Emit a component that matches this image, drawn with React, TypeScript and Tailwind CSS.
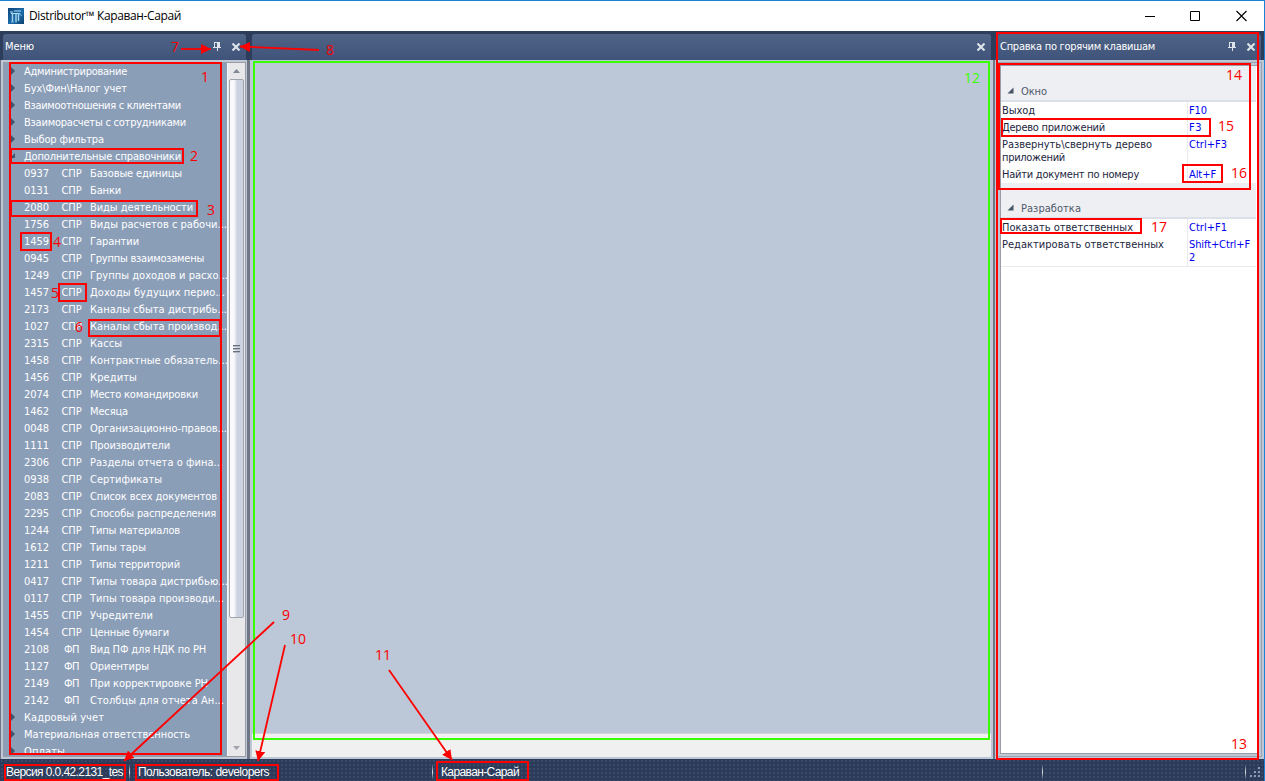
import { useLayoutEffect, useRef, useState } from "react";
import type { ReactNode } from "react";

/** Single line of text whose tracking is adjusted so that it spans `w` pixels. */
function Fit({ w, children, className = "" }: { w: number; children: string; className?: string }) {
  const ref = useRef<HTMLSpanElement>(null);
  const [tracking, setTracking] = useState(0);
  useLayoutEffect(() => {
    const el = ref.current;
    if (!el) return;
    el.style.letterSpacing = "0px";
    const natural = el.getBoundingClientRect().width;
    const next = (w - natural) / children.length;
    el.style.letterSpacing = `${next}px`;
    setTracking(next);
  }, [w, children]);
  return (
    <span ref={ref} className={`inline-block whitespace-pre ${className}`} style={{ letterSpacing: `${tracking}px` }}>
      {children}
    </span>
  );
}

type Doc = [code: string, kind: string, name: string, width: number];

const topGroups: [string, number][] = [
  ["Администрирование", 103],
  ["Бух\\Фин\\Налог учет", 103],
  ["Взаимоотношения с клиентами", 157],
  ["Взаиморасчеты с сотрудниками", 162],
  ["Выбор фильтра", 80],
];

const docs: Doc[] = [
  ["0937", "СПР", "Базовые единицы", 92],
  ["0131", "СПР", "Банки", 31],
  ["2080", "СПР", "Виды деятельности", 103],
  ["1756", "СПР", "Виды расчетов с рабочи...", 137],
  ["1459", "СПР", "Гарантии", 49],
  ["0945", "СПР", "Группы взаимозамены", 114],
  ["1249", "СПР", "Группы доходов и расхо...", 138],
  ["1457", "СПР", "Доходы будущих перио...", 135],
  ["2173", "СПР", "Каналы сбыта дистрибь...", 137],
  ["1027", "СПР", "Каналы сбыта производ...", 137],
  ["2315", "СПР", "Кассы", 32],
  ["1458", "СПР", "Контрактные обязатель...", 138],
  ["1456", "СПР", "Кредиты", 47],
  ["2074", "СПР", "Место командировки", 108],
  ["1462", "СПР", "Месяца", 38],
  ["0048", "СПР", "Организационно-правов...", 137],
  ["1111", "СПР", "Производители", 80],
  ["2306", "СПР", "Разделы отчета о фина...", 133],
  ["0938", "СПР", "Сертификаты", 72],
  ["2083", "СПР", "Список всех документов", 127],
  ["2295", "СПР", "Способы распределения", 126],
  ["1244", "СПР", "Типы материалов", 90],
  ["1612", "СПР", "Типы тары", 56],
  ["1211", "СПР", "Типы территорий", 90],
  ["0417", "СПР", "Типы товара дистрибью...", 138],
  ["0117", "СПР", "Типы товара производи...", 134],
  ["1455", "СПР", "Учредители", 63],
  ["1454", "СПР", "Ценные бумаги", 79],
  ["2108", "ФП", "Вид ПФ для НДК по РН", 116],
  ["1127", "ФП", "Ориентиры", 59],
  ["2149", "ФП", "При корректировке РН", 118],
  ["2142", "ФП", "Столбцы для отчета Ан...", 134],
];

const bottomGroups: [string, number][] = [
  ["Кадровый учет", 80],
  ["Материальная ответственность", 166],
  ["Оплаты", 41],
];

function CloseIcon() {
  return (
    <svg width="10" height="8" viewBox="0 0 10 8" className="shrink-0">
      <path d="M1.5 .5 8.5 7.5M8.5 .5 1.5 7.5" stroke="#dfe4eb" strokeWidth="2.1" />
    </svg>
  );
}

function PinIcon() {
  return (
    <svg width="8" height="9" viewBox="0 0 8 9" className="shrink-0" shapeRendering="crispEdges">
      <path d="M1 0h6v5h1v1H5v3H4V6H0V5h1zM2 1v4h2V1z" fill="#dfe4eb" fillRule="evenodd" />
    </svg>
  );
}

function AppIcon() {
  return (
    <svg width="16" height="16" viewBox="0 0 16 16" className="shrink-0">
      <defs>
        <linearGradient id="logo" x1="0" y1="0" x2="1" y2="1">
          <stop offset="0" stopColor="#0d477b" />
          <stop offset=".55" stopColor="#1b6cab" />
          <stop offset="1" stopColor="#0b426f" />
        </linearGradient>
      </defs>
      <rect width="16" height="16" fill="url(#logo)" />
      <path d="M2 4h3M6 3h7M3 5.500h9" stroke="#b9e3f5" strokeWidth="1" />
      <path d="M4.500 5v9M8 5.500V14M10.500 5.500V13" stroke="#a3d4ec" strokeWidth="1.4" />
      <path d="M10.500 6h2l1 2M3 14h3M7 14h2" stroke="#6fb3db" strokeWidth="1" fill="none" />
    </svg>
  );
}

function Header({ children, className }: { children: ReactNode; className: string }) {
  return (
    <div className={`flex h-[26px] shrink-0 items-center rounded-t-[3px] bg-linear-to-b from-[#4f6386] to-[#40547b] text-white ${className}`}>
      {children}
    </div>
  );
}

function GroupRow({ label, w, open = false }: { label: string; w: number; open?: boolean }) {
  return (
    <div className="flex h-[17px] shrink-0 items-center">
      <svg width="5" height="9" viewBox="0 0 5 9" className="mr-[9px] ml-[6px] shrink-0">
        <path d={open ? "M5 1V6H0z" : "M1 0 5 4 1 8z"} fill="#41556a" />
      </svg>
      <Fit w={w}>{label}</Fit>
    </div>
  );
}

function HelpGroup({ label, w }: { label: string; w: number }) {
  return (
    <div className="flex h-[36px] items-end border-b-2 border-[#dce0e8] bg-[#eeeff3] pl-[6px] text-[#50596c]">
      <svg width="7" height="7" viewBox="0 0 7 7" className="mr-[7px] mb-[6px]">
        <path d="M6.500 .5V6.500H.5z" fill="#465468" />
      </svg>
      <Fit w={w}>{label}</Fit>
    </div>
  );
}

function Key({ lines, keys, h }: { lines: [string, number][]; keys: [string, number][]; h: string }) {
  return (
    <div className={`flex pt-[2px] leading-[13px] ${h}`}>
      <div className="flex w-[186px] shrink-0 flex-col items-start pl-[1px] text-[#1c2640]">
        {lines.map(([t, w]) => <Fit key={t} w={w}>{t}</Fit>)}
      </div>
      <div className="-mt-[2px] flex grow flex-col items-start border-l border-[#e8eaef] pt-[2px] pl-[1px] text-[#0000f0]">
        {keys.map(([t, w]) => <Fit key={t} w={w}>{t}</Fit>)}
      </div>
    </div>
  );
}

const boxes = [
  [10, 63, 211, 691], [11, 149, 172, 14], [11, 201, 186, 15], [21, 233, 30, 17], [59, 284, 27, 17],
  [89, 320, 131, 16], [997, 33, 261, 726], [999, 64, 251, 125], [1002, 119, 208, 17], [1183, 165, 39, 17],
  [1001, 219, 140, 14], [5, 765, 120, 15], [136, 765, 142, 15], [437, 762, 91, 18],
];

const arrows = [
  [181, 49, 211, 49], [319, 50, 240, 46.5], [274, 622, 124, 761], [285, 645, 258, 761], [389, 670, 452, 760],
];

const labels: [string, string][] = [
  ["1", "left-[201px] top-[67px]"], ["2", "left-[190px] top-[146px]"], ["3", "left-[207px] top-[200px]"],
  ["4", "left-[53px] top-[232px]"], ["5", "left-[51px] top-[283px]"], ["6", "left-[75px] top-[317px]"],
  ["7", "left-[171px] top-[37px]"], ["8", "left-[326px] top-[40px]"], ["9", "left-[282px] top-[605px]"],
  ["10", "left-[290px] top-[629px]"], ["11", "left-[375px] top-[645px]"], ["13", "left-[1231px] top-[734px]"],
  ["14", "left-[1226px] top-[65px]"], ["15", "left-[1218px] top-[116px]"], ["16", "left-[1231px] top-[163px]"],
  ["17", "left-[1151px] top-[217px]"],
];

function Annotations() {
  return (
    <div className="pointer-events-none absolute inset-0 font-['Open_Sans',sans-serif] text-[14px] leading-5 text-[#fa0000]">
      <svg width="1265" height="781" className="absolute inset-0" fill="none" stroke="#ff0000" strokeWidth="2">
        <defs>
          <marker id="tip" markerUnits="userSpaceOnUse" markerWidth="11" markerHeight="10" refX="10" refY="5" orient="auto">
            <path d="M0 0 10 5 0 10z" fill="#ff0000" stroke="none" />
          </marker>
        </defs>
        {boxes.map(([x, y, w, h], i) => <rect key={i} x={x} y={y} width={w} height={h} />)}
        <rect x="254" y="62" width="735" height="677" stroke="#38ff00" />
        {arrows.map(([x1, y1, x2, y2], i) => (
          <line key={i} x1={x1} y1={y1} x2={x2} y2={y2} strokeWidth="1.8" markerEnd="url(#tip)" />
        ))}
      </svg>
      {labels.map(([n, pos]) => <span key={n} className={`absolute ${pos}`}>{n}</span>)}
      <span className="absolute top-[68px] left-[964px] text-[#38ff00]">12</span>
    </div>
  );
}

function Divider() {
  return <div className="h-4 w-px shrink-0 bg-linear-to-b from-[#2c3b59] via-[#e0e4ea] to-[#2c3b59]" />;
}

export default function App() {
  return (
    <div className="relative flex h-[781px] w-[1265px] flex-col overflow-hidden border-t border-r border-[#1883d7] bg-[#2d3d5c] font-['DejaVu_Sans_Condensed','DejaVu_Sans',sans-serif] text-[11px] leading-[17px]">
      <div className="flex h-[30px] shrink-0 items-center bg-white pr-[17px] pl-2 text-black">
        <AppIcon />
        <Fit w={152} className="-mt-px ml-[5px] font-['Open_Sans',sans-serif] text-[12px]">Distributor™ Караван-Сарай</Fit>
        <svg width="102" height="12" viewBox="0 0 102 12" className="-mt-px ml-auto" fill="none" stroke="#000">
          <path d="M0 6.500H10M45.500 1.500h9v9h-9z" />
          <path d="m91.500 1 10 10m0-10-10 10" strokeWidth="1.1" />
        </svg>
      </div>

      <div className="flex h-[728px] shrink-0 pt-[3px]">
        <div className="flex w-[248px] shrink-0 flex-col">
          <Header className="mr-[2px] ml-[3px] pr-[5px] pb-px pl-[2px]">
            <Fit w={29}>Меню</Fit>
            <div className="ml-auto flex items-center gap-[10px]"><PinIcon /><CloseIcon /></div>
          </Header>
          <div className="flex h-[699px] border-x border-[#6f7585] bg-[#bdc7d6] pt-[2px] pr-px pb-[2px]">
            <div className="ml-[2px] flex grow border border-[#9a9ca6] bg-[#8b9eb8]">
              <div className="flex w-[223px] shrink-0 flex-col overflow-hidden text-white">
                {topGroups.map(([t, w]) => <GroupRow key={t} label={t} w={w} />)}
                <GroupRow label="Дополнительные справочники" w={157} open />
                {docs.map(([code, kind, name, w]) => (
                  <div key={code} className="flex h-[17px] shrink-0 items-center pl-[20px]">
                    <div className="flex w-[29px] shrink-0"><Fit w={25}>{code}</Fit></div>
                    <div className="flex w-[37px] shrink-0 justify-center"><Fit w={kind === "ФП" ? 15 : 20}>{kind}</Fit></div>
                    <Fit w={w}>{name}</Fit>
                  </div>
                ))}
                {bottomGroups.map(([t, w]) => <GroupRow key={t} label={t} w={w} />)}
              </div>
              <div className="flex grow flex-col items-center border-l border-[#f8f8fa] bg-[#e8e8eb]">
                <div className="flex h-[16px] w-full shrink-0 items-center justify-center">
                  <svg width="7" height="4" viewBox="0 0 7 4"><path d="M3.500 0 7 4H0z" fill="#818796" /></svg>
                </div>
                <div className="flex h-[539px] w-[15px] shrink-0 items-center justify-center rounded-[2px] border border-[#9ea3ae] bg-linear-to-r from-[#fafafc] from-30% to-[#ccd2df] to-55%">
                  <svg width="7" height="8" viewBox="0 0 7 8" shapeRendering="crispEdges">
                    <path d="M0 .5h7M0 3.500h7M0 6.500h7" stroke="#68707e" />
                    <path d="M0 1.500h7M0 4.500h7M0 7.500h7" stroke="#b2b8c5" />
                  </svg>
                </div>
                <svg width="7" height="4" viewBox="0 0 7 4" className="mt-auto mb-[6px]"><path d="M0 0h7L3.500 4z" fill="#a0a3ab" /></svg>
              </div>
            </div>
          </div>
        </div>

        <div className="flex w-[747px] shrink-0 flex-col">
          <Header className="mr-[4px] ml-[4px] pr-[5px] pb-px">
            <div className="ml-auto flex"><CloseIcon /></div>
          </Header>
          <div className="flex h-[699px] flex-col border-x-2 border-[#6f7585] bg-[#bdc7d6] px-[2px] pb-[2px]">
            <div className="h-[674px] border-b border-[#d2d5da] bg-[#bcc7d7]" />
            <div className="grow bg-[#f0f0f0]" />
          </div>
        </div>

        <div className="flex w-[269px] shrink-0 flex-col">
          <Header className="mr-[3px] ml-[2px] pr-[5px] pb-px pl-[3px]">
            <Fit w={155}>Справка по горячим клавишам</Fit>
            <div className="ml-auto flex items-center gap-[10px]"><PinIcon /><CloseIcon /></div>
          </Header>
          <div className="flex h-[699px] bg-[#bdc7d6] pt-[2px] pr-[2px] pb-[2px] pl-[2px]">
            <div className="flex grow border border-[#9da3ae] p-[2px]">
              <div className="grow border border-[#9a9da5] bg-white pr-[2px]">
                <HelpGroup label="Окно" w={26} />
                <Key h="h-[17px]" lines={[["Выход", 33]]} keys={[["F10", 18]]} />
                <Key h="h-[17px]" lines={[["Дерево приложений", 103]]} keys={[["F3", 13]]} />
                <Key h="h-[30px]" lines={[["Развернуть\\свернуть дерево", 150], ["приложений", 63]]} keys={[["Ctrl+F3", 38]]} />
                <Key h="h-[17px]" lines={[["Найти документ по номеру", 137]]} keys={[["Alt+F", 27]]} />
                <HelpGroup label="Разработка" w={60} />
                <Key h="h-[17px]" lines={[["Показать ответственных", 131]]} keys={[["Ctrl+F1", 38]]} />
                <Key h="h-[30px]" lines={[["Редактировать ответственных", 162]]} keys={[["Shift+Ctrl+F", 61], ["2", 7]]} />
                <div className="h-px bg-[#e8eaef]" />
              </div>
            </div>
          </div>
        </div>
      </div>

      <div className="flex h-[22px] shrink-0 items-center bg-[#2c3b59] bg-[radial-gradient(#394a6b_0.7px,transparent_1px)] bg-[size:4px_4px] pt-[4px] font-['Liberation_Sans',Arial,sans-serif] text-[12px] text-white">
        <div className="w-[129px] shrink-0 pl-[6px]"><Fit w={117}>Версия 0.0.42.2131_tes</Fit></div>
        <Divider />
        <div className="w-[302px] shrink-0 pl-[8px]"><Fit w={131}>Пользователь: developers</Fit></div>
        <Divider />
        <div className="w-[609px] shrink-0 pl-[8px]"><Fit w={78}>Караван-Сарай</Fit></div>
        <Divider />
        <div className="w-[202px] shrink-0" />
        <Divider />
        <svg width="11" height="10" viewBox="0 0 11 10" className="ml-[4px]" fill="#8c9ab4">
          <path d="M8 0h2v2H8zM4 4h2v2H4zM8 4h2v2H8zM0 8h2v2H0zM4 8h2v2H4zM8 8h2v2H8z" />
        </svg>
      </div>
      <div className="pointer-events-none absolute -top-px left-0 h-[781px] w-[1265px]">
        <Annotations />
      </div>
    </div>
  );
}
